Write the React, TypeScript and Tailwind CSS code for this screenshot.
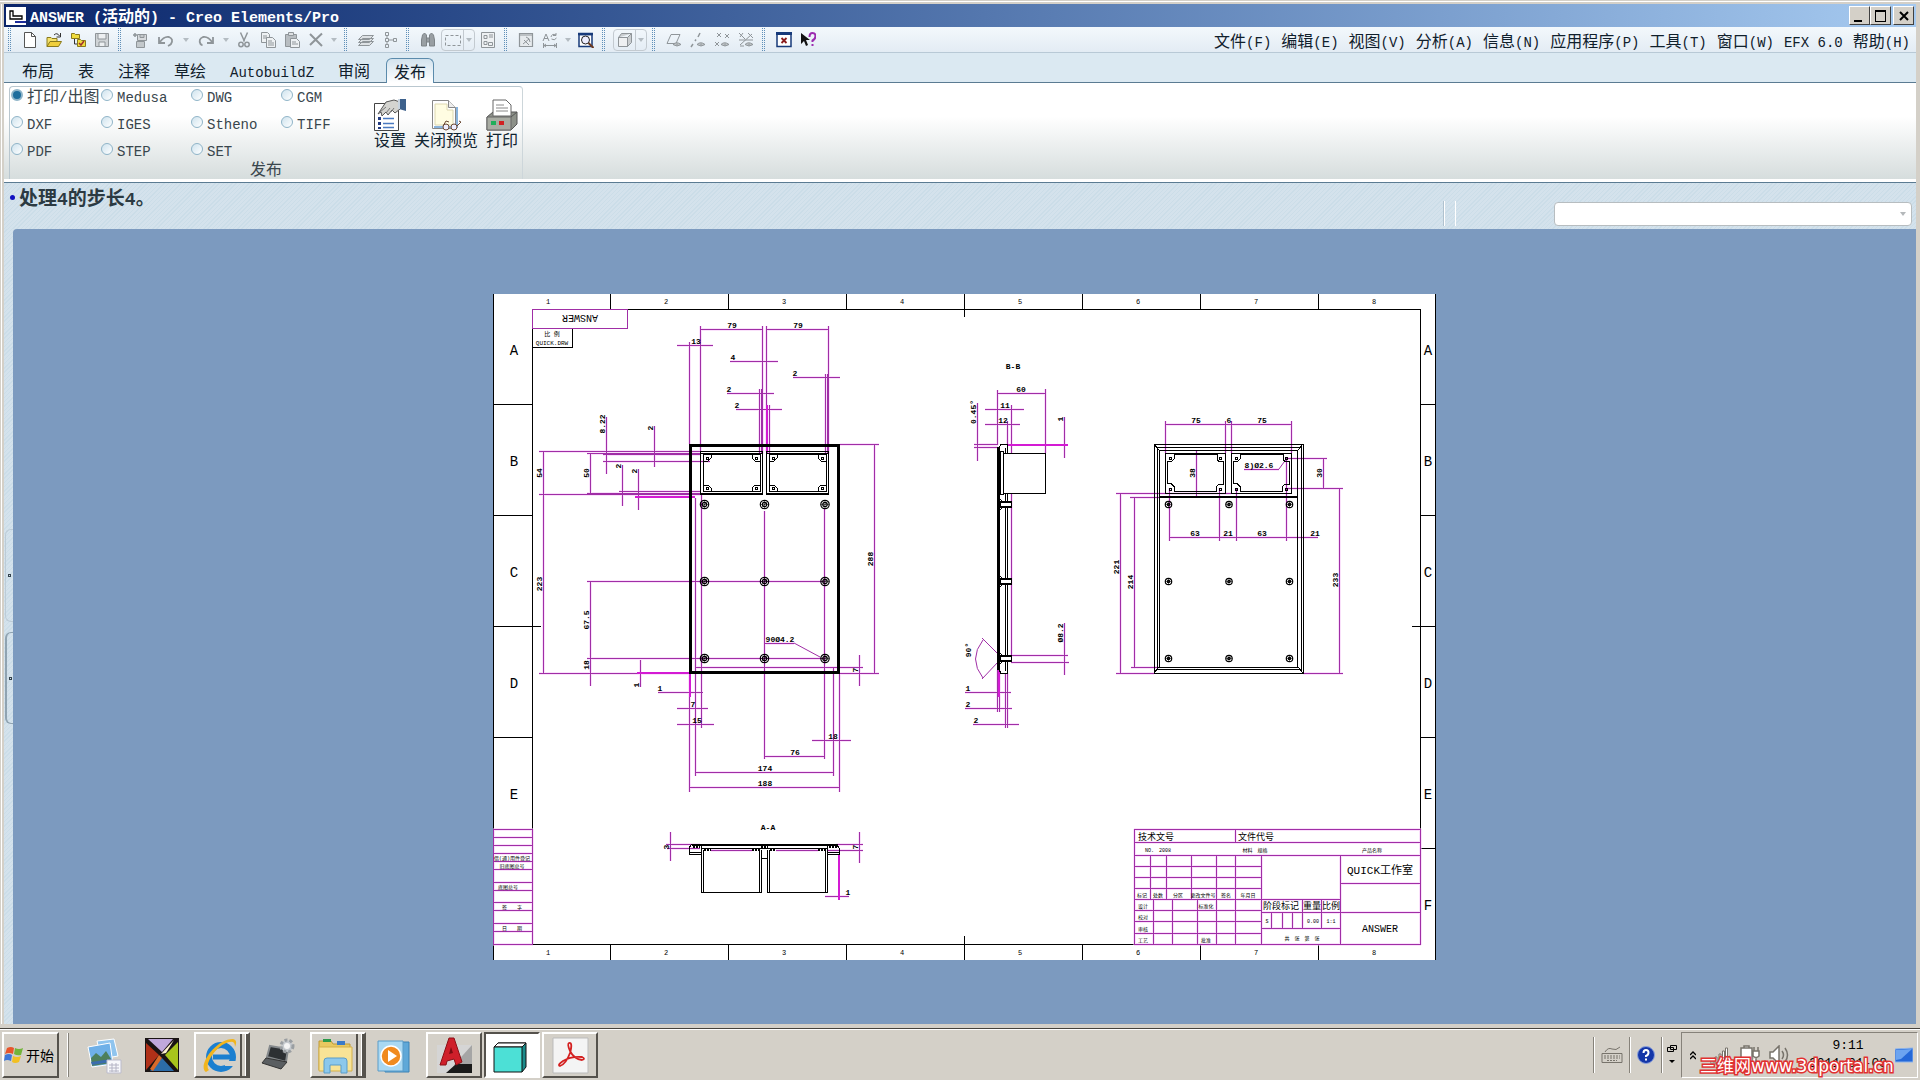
import React from 'react';

type Seg = [number, number, number];
type Note = [number, number, string];

// Splits a label so that Latin runs keep the half-width rhythm of the Chinese ones.
const Txt = ({ children, latin = 'text-sm' }: { children: string; latin?: string }) => (
  <>
    {children.split(/([\x20-\x7e]+)/).filter(Boolean).map((part, i) =>
      /^[\x20-\x7e]/.test(part) ? (
        <span key={i} className={`whitespace-pre font-['Liberation_Mono',monospace] leading-none ${latin}`}>{part}</span>
      ) : (
        <span key={i}>{part}</span>
      )
    )}
  </>
);

const Icon = ({ children, size = 'size-4' }: { children: React.ReactNode; size?: string }) => (
  <svg viewBox="0 0 16 16" className={`${size} shrink-0`} fill="none" stroke="#8f9599" strokeWidth="1" aria-hidden="true">
    {children}
  </svg>
);

const Tool = ({ label, wide, children }: { label: string; wide?: boolean; children: React.ReactNode }) => (
  <button aria-label={label} className={`flex h-6 items-center justify-center ${wide ? 'w-7' : 'w-6'}`}>
    <Icon>{children}</Icon>
  </button>
);

const Drop = () => (
  <button aria-label="更多" className="flex h-6 w-3 items-center justify-center">
    <span className="border-x-[3px] border-t-4 border-x-transparent border-t-[#b4bcc2]" />
  </button>
);

const Split = ({ label, children }: { label: string; children: React.ReactNode }) => (
  <span className="mx-px flex h-[22px] w-[34px] items-center rounded-sm border border-[#c3cad0]">
    <button aria-label={label} className="flex h-full w-[22px] items-center justify-center border-r border-[#c3cad0]">
      <Icon>{children}</Icon>
    </button>
    <button aria-label="更多" className="flex h-full flex-1 items-center justify-center">
      <span className="border-x-[3px] border-t-4 border-x-transparent border-t-[#b4bcc2]" />
    </button>
  </span>
);

const Grip = () => (
  <svg viewBox="0 0 4 23" className="mr-1.5 ml-1 h-[23px] w-1 shrink-0" aria-hidden="true">
    <path d="M.5 0v23M2.5 0v23" stroke="#5f8fb8" strokeDasharray="1 1" />
  </svg>
);

const eye = <path d="M7 12.500q3.500-3.500 8 0q-4 3-8 0z M11 11.500v2" fill="#c3c8cb" />;

const Toolbar = () => (
  <div className="flex items-center">
    <Grip />
    <Tool label="新建"><path d="M2.500.5h7l4 4v11h-11z" fill="#fff" stroke="#555" /><path d="M9.500.5v4h4" stroke="#555" /></Tool>
    <Tool label="打开">
      <path d="M1 14.500V5.500h4l1 1h5v3" fill="#f5e26a" stroke="#8a7a1c" />
      <path d="M1 14.500l3-5h11.500l-3 5z" fill="#f0cf3c" stroke="#8a7a1c" />
      <path d="M8 3q3-3 5.500 1M14.500 1v4h-4" stroke="#333" />
    </Tool>
    <Tool label="工作目录">
      <path d="M1.500 1.500h3l1 1h4v4h-8z" fill="#f0dc3c" stroke="#8a7a1c" />
      <path d="M4.500 7v5h3" stroke="#333" />
      <path d="M7.500 7.500h3l1 1h4v6h-8z" fill="#f0dc3c" stroke="#8a7a1c" />
      <path d="M9 11l2 2 3-4" stroke="#a03030" strokeWidth="1.500" />
    </Tool>
    <Tool label="保存"><path d="M1.500 1.500h13v13h-13z" fill="#cfd3d6" /><path d="M4 2v5h8V2M5 14v-4h6v4" fill="#eceff1" /></Tool>
    <Grip />
    <Tool label="再生">
      <path d="M5.500 2.500h9v6h-9z" fill="#d8dbde" /><path d="M8 3v2.500h4V3M4.500 9.500h8v6h-8z" fill="#c3c8cb" />
      <path d="M1 3h4M3 1v4" strokeWidth="1.500" />
    </Tool>
    <Tool label="撤销" wide><path d="M1 5v6h6M1.500 10.500Q6 4 11 5q5 2 2 7-1 1-3 2" strokeWidth="1.800" /></Tool>
    <Drop />
    <Tool label="重做" wide><path d="M15 5v6H9M14.500 10.500Q10 4 5 5q-5 2-2.500 7 1 1 2 1" strokeWidth="1.800" /></Tool>
    <Drop />
    <Tool label="剪切">
      <path d="M4.500.5l4 9M11.500.5l-4 9" strokeWidth="1.500" />
      <circle cx="5" cy="12.500" r="2.200" strokeWidth="1.500" /><circle cx="11" cy="12.500" r="2.200" strokeWidth="1.500" />
    </Tool>
    <Tool label="复制">
      <path d="M1.500.5h6l2 2v8h-8z" fill="#eef1f3" /><path d="M3 4h4M3 6h4" />
      <path d="M6.500 5.500h6l3 3v7h-9z" fill="#eef1f3" /><path d="M8 9h4M8 11h6M8 13h6" />
    </Tool>
    <Tool label="粘贴">
      <path d="M1.500 2.500h11v12h-11z" fill="#b8bdc1" /><path d="M4.500.5h5v3h-5z" fill="#dde0e2" />
      <path d="M6.500 6.500h6l3 3v6h-9z" fill="#eef1f3" /><path d="M8 10h4M8 12h6" />
    </Tool>
    <Tool label="删除"><path d="M2 2l12 12M14 1.500L2 13" strokeWidth="2" /></Tool>
    <Drop />
    <Grip />
    <Tool label="图层">
      <path d="M.5 13.500l4-4h11l-4 4zM.5 10.500l4-4h11l-4 4zM.5 7.500l4-4h11l-4 4z" fill="#dde1e4" />
    </Tool>
    <Tool label="模型树"><path d="M3.500.5h3v3h-3zM3.500 6.500h3v3h-3zM3.500 12.500h3v3h-3zM11.500 6.500h3v3h-3zM5 4v2M5 10v2M7 8h4" /></Tool>
    <Grip />
    <Tool label="查找">
      <path d="M2.500 3l2-2 2 2v11h-5V8zM13.500 3l-2-2-2 2v11h5V8zM6.500 6h3v4h-3z" fill="#999fa3" stroke="#7d8387" />
    </Tool>
    <Split label="框选"><path d="M.5 3.500h15v10H.5z" strokeDasharray="3 2" /></Split>
    <Tool label="选择过滤">
      <path d="M1.500.5h13v15h-13z" fill="#eef1f3" /><path d="M4 3.500h3v3H4zM9 3h4M9 5h4M4 9.500h3v3H4zM8.500 10.500h4v3h-4z" />
    </Tool>
    <Grip />
    <Tool label="草绘器"><path d="M1.500 1.500h13v13h-13zM1.500 3h13" fill="#e6eaed" strokeWidth="1.200" /><path d="M5 12l6-5M8 5q4 1 4 5M6 8l5 5" /></Tool>
    <Tool label="切换尺寸">
      <path d="M1 9l3-7 3 7M2 6.500h4M1.500 11v5M14.500 11v5M2 13.500h12M4 12l-2 1.500L4 15M12 12l2 1.500L12 15" />
      <path d="M9 5q1-4 5-2M14 1v2.500h-3M14.500 6q-2 3-5 1" />
    </Tool>
    <Drop />
    <Tool label="重新调整">
      <path d="M1 2.500h13v12H1z" fill="#fff" stroke="#173a7a" strokeWidth="1.500" /><path d="M0 2h15" stroke="#173a7a" strokeWidth="2.500" />
      <circle cx="7.500" cy="8" r="4" stroke="#222" fill="#eef" /><path d="M10.500 11l5 5" stroke="#6b3a22" strokeWidth="2" />
    </Tool>
    <Grip />
    <Split label="着色"><path d="M1.500 5.500h9v9h-9z" fill="#eef0f2" /><path d="M1.500 5.500l3-4h10v9l-4 4v-9l4-4M10.500 5.500h-9" fill="#c9cdd0" /></Split>
    <Grip />
    <Tool label="基准平面"><path d="M1 11.500l4-9h9l-4 9z" />{eye}</Tool>
    <Tool label="基准轴"><path d="M1 15l2-3M5 9l1-1.500M8 5l2-4" strokeWidth="1.500" />{eye}</Tool>
    <Tool label="基准点"><path d="M3 1l4 4M7 1L3 5M11 2l4 4M15 2l-4 4M1 10l4 4M5 10l-4 4" />{eye}</Tool>
    <Tool label="坐标系"><path d="M1 1l6 6M5 1L2 5M14 2L2 13M10 1l5 5M1 8h14M2 14h4" />{eye}</Tool>
    <Grip />
    <Tool label="关闭窗口">
      <path d="M1 1.500h14v13H1z" fill="#fff" stroke="#173a7a" strokeWidth="1.500" /><path d="M0 1.500h16" stroke="#173a7a" strokeWidth="3" />
      <path d="M5.500 6l5 5M10.500 6l-5 5" stroke="#8a1c1c" strokeWidth="1.800" />
    </Tool>
    <Tool label="上下文帮助">
      <path d="M1 1v11l3-3 2 5 2-1-2-5h4z" fill="#111" stroke="none" />
      <path d="M9.500 5q0-4 3-4t3 3-3 4.500V10M12.500 12v2" stroke="#9c2cb0" strokeWidth="2" />
    </Tool>
  </div>
);

const menus = ['文件(F)', '编辑(E)', '视图(V)', '分析(A)', '信息(N)', '应用程序(P)', '工具(T)', '窗口(W)', 'EFX 6.0', '帮助(H)'];
const tabs = ['布局', '表', '注释', '草绘', 'AutobuildZ', '审阅', '发布'];
const formats = ['打印/出图', 'Medusa', 'DWG', 'CGM', 'DXF', 'IGES', 'Stheno', 'TIFF', 'PDF', 'STEP', 'SET'];

const Ribbon = () => (
  <div className="border-b border-[#5b7b92] bg-white pb-[3px]">
    <div className="bg-linear-to-b from-white from-35% to-[#d6dddd] pt-[3px] pl-[5px]">
      <div className="w-[514px] rounded-t-sm border border-b-0 border-[#b9c7cf] border-r-[#cdd6da] px-px">
        <div className="flex h-[71px] gap-[3px]">
          <fieldset className="-mt-0.5 grid grid-cols-[repeat(4,90px)] grid-rows-[repeat(3,27px)]">
            {formats.map((f, i) => (
              <label key={f} className="flex h-5 items-center gap-1 text-base leading-5 whitespace-nowrap text-[#39464d]">
                <input
                  type="radio"
                  name="format"
                  defaultChecked={i === 0}
                  className="size-3 shrink-0 appearance-none rounded-full border border-[#8fb4c8] bg-linear-to-br from-[#cfe3ee] to-white checked:border-2 checked:bg-[#1f6d9c] checked:bg-none"
                />
                <span><Txt>{f}</Txt></span>
              </label>
            ))}
          </fieldset>
          <div className="flex gap-2 pt-3 text-[#0f2430]">
            <button className="flex flex-col items-center">
              <svg viewBox="0 0 32 32" className="size-8" aria-hidden="true">
                <path d="M.5 4.500h24v27H.5z" fill="#fff" stroke="#444" />
                <path d="M4 18h3v3H4zM4 23h3v3H4zM4 28h3v2H4z" fill="#223a80" /><path d="M9 19.500h11M9 24.500h11M9 28.500h11" stroke="#4a7ac0" strokeWidth="1.500" />
                <path d="M4 15L12 3l8-2 6 2v7l-5 4-3-3-4 5-2-3-4 4-1-4z" fill="#d4d4d0" stroke="#555" />
                <path d="M12 8l-6 5M16 9l-4 5M20 9l-3 4" stroke="#777" /><path d="M25 0h7v12l-7-2z" fill="#3d618c" />
                <path d="M25 0v10" stroke="#c8d4e0" strokeWidth="2" />
              </svg>
              <span className="text-base leading-4">设置</span>
            </button>
            <button className="flex flex-col items-center">
              <svg viewBox="0 0 32 32" className="size-8" aria-hidden="true">
                <path d="M2.500 1.500h16l7 7v21h-23z" fill="#fff" stroke="#888" /><path d="M5 5h12v6h6v15H5z" fill="#fffde2" stroke="#ddd8b0" />
                <path d="M18.500 1.500v7h7" fill="#eee" stroke="#888" /><path d="M27 8v20H4" fill="none" stroke="#8ab4dc" strokeWidth="2" />
                <circle cx="16" cy="28" r="3" fill="#eef" stroke="#6b4a35" /><circle cx="24" cy="28" r="3" fill="#eef" stroke="#6b4a35" />
                <path d="M13 27l3-5 3 1M27 27l4-4-2-1" fill="none" stroke="#6b4a35" />
              </svg>
              <span className="text-base leading-4">关闭预览</span>
            </button>
            <button className="flex flex-col items-center">
              <svg viewBox="0 0 32 32" className="size-8" aria-hidden="true">
                <path d="M1 18l6-5h24v12l-6 6H1z" fill="#8d9189" stroke="#555" /><path d="M1 18h24v13H1z" fill="#a9aca3" stroke="#666" />
                <path d="M25 18l6-5" stroke="#555" /><path d="M7 17V1h13l5 5v11z" fill="#fff" stroke="#666" />
                <path d="M10 6h8M10 9h12M10 12h12" stroke="#888" /><path d="M5 22h5v4H5z" fill="#1fae5a" /><path d="M13 22h5v4h-5z" fill="#d02222" />
              </svg>
              <span className="text-base leading-4">打印</span>
            </button>
          </div>
        </div>
        <div className="h-[21px] text-center text-base leading-5 text-[#39464d]">发布</div>
      </div>
    </div>
  </div>
);

/* ---------- drawing sheet ---------- */

const hor = (segs: Seg[]) => segs.map(([y, a, b]) => `M${a} ${y + 0.5}H${b}`).join('');
const ver = (segs: Seg[]) => segs.map(([x, a, b]) => `M${x + 0.5} ${a}V${b}`).join('');

const dimH: Seg[] = [
  [329, 700, 763], [329, 766, 829], [345, 677, 713], [361, 730, 778], [377, 793, 840], [393, 727, 774], [409, 736, 782],
  [451, 539, 700], [453, 587, 700], [454, 603, 700], [461, 603, 710], [491, 619, 700], [493, 587, 700], [494, 539, 700],
  [444, 840, 879], [673, 840, 879], [581, 587, 825], [658, 587, 825], [673, 539, 690], [667, 695, 863],
  [692, 658, 703], [708, 677, 708], [724, 677, 714], [740, 812, 851], [756, 764, 825], [772, 695, 834], [787, 689, 840], [643, 764, 794],
  [844, 666, 700], [848, 667, 700], [844, 836, 863], [850, 828, 863], [850, 711, 752], [850, 776, 818], [896, 825, 849],
  [393, 998, 1045], [409, 985, 1024], [424, 985, 1020], [444, 974, 998], [447, 974, 998], [655, 1011, 1068], [662, 1011, 1069],
  [692, 965, 1011], [708, 965, 1012], [724, 973, 1019],
  [424, 1165, 1292], [469, 1244, 1279], [458, 1286, 1327], [488, 1286, 1343], [673, 1303, 1343], [673, 1116, 1154],
  [493, 1116, 1231], [497, 1130, 1160], [667, 1131, 1160], [537, 1169, 1318],
];

const dimV: Seg[] = [
  [700, 326, 452], [762, 326, 454], [766, 326, 452], [828, 326, 454], [689, 342, 444], [825, 374, 454], [827, 374, 454],
  [759, 389, 454], [761, 389, 454], [769, 405, 454], [606, 417, 474], [654, 426, 467], [543, 451, 673], [590, 453, 493],
  [622, 465, 506], [638, 469, 510], [695, 498, 776], [701, 494, 728], [764, 511, 759], [824, 508, 759], [874, 444, 673],
  [590, 581, 686], [640, 660, 687], [689, 673, 792], [839, 673, 792], [833, 667, 776], [859, 655, 686],
  [670, 832, 861], [859, 832, 863],
  [997, 390, 445], [1045, 389, 453], [1011, 405, 655], [1007, 421, 445], [977, 403, 461], [1064, 417, 458], [1064, 623, 675],
  [997, 670, 712], [999, 670, 712], [1005, 673, 728], [1007, 673, 728],
  [1165, 421, 453], [1225, 421, 453], [1231, 421, 453], [1291, 421, 453], [1196, 451, 496], [1323, 458, 488], [1339, 488, 673],
  [1120, 493, 673], [1134, 497, 667], [1169, 488, 541], [1219, 488, 541], [1236, 488, 541], [1286, 458, 541],
];

const tableH: Seg[] = [
  ...[829, 837, 845, 853, 861, 869, 882, 890, 902, 910, 923, 931, 944].map((y): Seg => [y, 493, 533]),
  [829, 1134, 1421], [842, 1134, 1421], [855, 1134, 1421], [944, 1134, 1421],
  ...[866, 877, 888, 899, 910, 921, 933].map((y): Seg => [y, 1134, 1261]),
  [899, 1261, 1340], [912, 1261, 1421], [928, 1261, 1340], [883, 1340, 1421],
];

const tableV: Seg[] = [
  [532, 829, 944], [493, 829, 944], [1134, 829, 945], [1420, 829, 945], [1235, 829, 842], [1235, 855, 944], [1261, 855, 944], [1340, 855, 944],
  [1150, 855, 899], [1166, 855, 899], [1191, 855, 899], [1216, 855, 944], [1153, 899, 944], [1172, 899, 944], [1197, 899, 944],
  [1302, 899, 928], [1321, 899, 928], [1271, 912, 928], [1282, 912, 928], [1292, 912, 928],
];

const columnTicks = [610, 728, 846, 964, 1082, 1200, 1318];
const leftTicks: Seg[] = [[404, 493, 532], [515, 493, 532], [626, 493, 541], [737, 493, 532]];
const rightTicks: Seg[] = [[404, 1420, 1436], [515, 1420, 1436], [626, 1412, 1436], [737, 1420, 1436], [848, 1420, 1436]];

const notes: Note[] = [
  [732, 329, '79'], [798, 329, '79'], [696, 345, '13'], [733, 361, '4'], [795, 377, '2'], [729, 393, '2'], [737, 409, '2'],
  [660, 692, '1'], [693, 708, '7'], [697, 724, '15'], [833, 740, '18'], [795, 756, '76'], [765, 772, '174'], [765, 787, '188'], [780, 643, '90Ø4.2'],
  [848, 896, '1'], [1021, 393, '60'], [1005, 409, '11'], [1003, 424, '12'], [968, 692, '1'], [968, 708, '2'], [976, 724, '2'],
  [1196, 424, '75'], [1229, 424, '6'], [1262, 424, '75'], [1259, 469, '8)Ø2.6'], [1195, 537, '63'], [1228, 537, '21'], [1262, 537, '63'], [1315, 537, '21'],
  [768, 831, 'A-A'], [1013, 370, 'B-B'],
];

const sideNotes: Note[] = [
  [606, 424, '8.22'], [654, 428, '2'], [543, 473, '54'], [590, 473, '50'], [622, 466, '2'], [638, 471, '2'], [874, 559, '288'],
  [543, 584, '223'], [590, 620, '67.5'], [590, 665, '18'], [640, 685, '1'], [859, 670, '7'], [670, 847, '3'], [859, 847, '7'],
  [977, 412, '0.45°'], [1064, 419, '1'], [972, 650, '90°'], [1064, 633, 'Ø8.2'],
  [1196, 473, '38'], [1323, 473, '30'], [1339, 580, '233'], [1120, 567, '221'], [1134, 582, '214'],
];

const tableNotes: Note[] = [
  [512, 860, '借(通)用件登记'], [512, 868, '旧底图总号'], [508, 889, '底图总号'], [512, 909, '签　　字'], [512, 930, '日　　期'],
  [1158, 852, 'NO.　2008'], [1255, 852, '材料　规格'], [1372, 852, '产品名称'],
  [1142, 897, '标记'], [1158, 897, '处数'], [1178, 897, '分区'], [1203, 897, '更改文件号'], [1226, 897, '签名'], [1248, 897, '年月日'],
  [1143, 908, '设计'], [1206, 908, '标准化'], [1143, 919, '校对'], [1143, 931, '审核'], [1143, 942, '工艺'], [1206, 942, '批准'],
  [1267, 923, 'S'], [1313, 923, '0.00'], [1331, 923, '1:1'], [1302, 940, '共　张　第　张'],
];

const Boss = ({ x, y, r }: { x: number; y: number; r: number }) => (
  <g>
    <circle cx={x} cy={y} r={r} />
    <circle cx={x} cy={y} r={r - 2} />
    <path d={`M${x - r} ${y}h${r * 2}M${x} ${y - r}v${r * 2}M${x - 2} ${y + 2}l4-4`} strokeWidth="0.500" />
  </g>
);

const Sheet = () => (
  <svg viewBox="493 294 943 666" className="w-[943px] shrink-0" role="img" aria-label="ANSWER" fontFamily="'Liberation Mono','Noto Sans CJK SC',monospace">
    <path d="M493 294h943v666H493z" fill="#fff" />
    <g fill="none" stroke="#000" shapeRendering="crispEdges">
      <path d="M493.500 294V960M532.500 309.500H1420.500V944.500H532.500zM1435.500 294V960M532.500 328V347.500H572.500V328" />
      <path d={ver(columnTicks.flatMap((x): Seg[] => [[x, 294, x === 964 ? 317 : 309], [x, x === 964 ? 936 : 944, 960]]))} />
      <path d={hor(leftTicks) + hor(rightTicks)} />
    </g>
    <g fill="none" stroke="#f6c4f8" strokeWidth="3" opacity="0.500">
      <path d={hor(dimH) + ver(dimV) + hor(tableH) + ver(tableV)} />
    </g>
    <g fill="none" stroke="#a02ea6" shapeRendering="crispEdges">
      <path d={hor(dimH) + ver(dimV) + hor(tableH) + ver(tableV)} />
      <path d="M532.500 309.500H627.500V328.500H532.500z" />
    </g>
    <path d="M794 643l26 14M1279 469l8-11M982 638l16 16M982 679l16-17M983 640q-15 19 0 38" fill="none" stroke="#a02ea6" />
    <path d="M635 497H695M767 405V454M637 673H690M690 673V697M839 855V900M1008 445H1068M998.500 670V697" fill="none" stroke="#d41ad4" strokeWidth="2" shapeRendering="crispEdges" />

    <g fill="none" stroke="#000" shapeRendering="crispEdges">
      <path d="M690.500 445.500H838.500V672.500H690.500z" strokeWidth="3" />
      <path d="M700.500 451.500H762.500V494.500H700.500zM766.500 451.500H828.500V494.500H766.500z" />
      <path d="M701 493.500H762M767 493.500H828M701 453.500H762M767 453.500H828" />
      <path d="M703.500 454.500H760.500V491.500H703.500zM769.500 454.500H826.500V491.500H769.500z" />
      {[703, 769].map((x) => (
        <path key={x} d={`M${x} 461h5l3-3v-4M${x + 57} 461h-5l-3-3v-4M${x} 485h5l3 3v4M${x + 57} 485h-5l-3 3v4M${x + 3} 457h2v2h-2zM${x + 52} 457h2v2h-2zM${x + 3} 487h2v2h-2zM${x + 52} 487h2v2h-2z`} />
      ))}

      <path d="M692 845H838" strokeWidth="2" />
      <path d="M701 848.500H828M689.500 848v6H701M689.500 852.500H701M692 844l-3 4M836 844l3 4M839.500 848v6H828M828 852.500h11M762 858.500h6M701.500 846V892.500H761.500V850M703.500 850V892M759.500 850V892M767.500 850V892.500H827.500V846M769.500 850V892M825.500 850V892" />
      <path d="M704 850h7M752 850h8M770 850h6M818 850h8M761 847h7M693 847h7M829 847h8" strokeWidth="2" strokeDasharray="2 1" />

      <path d="M998.500 447V670" strokeWidth="3" />
      <path d="M999 447l2-2.500h6.500V673.500H1001l-2-4M1005.500 448V671M1000.500 451.500h3V494.500h-3z" />
      <path d="M1003.500 453.500H1045.500V493.500H1003.500z" fill="#fff" />
      {[501, 578, 655].map((y) => (
        <path key={y} d={`M1000 ${y + 0.5}h11.500v6H1000zM1000 ${y + 1.5}h11M1000 ${y + 5.5}h11M1000 ${y - 2}l3 3M1000 ${y + 9}l3-3`} fill="#fff" />
      ))}

      <path d="M1154.500 444.500H1303.500V673.500H1154.500zM1157.500 447.500H1301.500V669.500H1157.500zM1159.500 450.500H1297.500V667.500H1159.500zM1154 444l5 6M1303 444l-5 6M1154 673l5-6M1303 673l-5-6" />
      <path d="M1160 497H1298" strokeWidth="2" />
      <path d="M1165.500 453.500H1225.500V493.500H1165.500zM1231.500 453.500H1291.500V493.500H1231.500z" />
      {[1167, 1233].map((x) => (
        <React.Fragment key={x}>
          <path d={`M${x + 7} 454.500H${x + 50}v5l2 2h4V484h-4l-3 3v4.500H${x + 7}v-5l-3-3h-4V461h5l2-2z`} />
          <path d={`M${x + 2} 457h2v2h-2zM${x + 52} 457h2v2h-2zM${x + 2} 488h2v2h-2zM${x + 52} 488h2v2h-2z`} />
        </React.Fragment>
      ))}
    </g>

    <g fill="none" stroke="#000" strokeWidth="1.200">
      {[504.5, 581.5, 658.5].flatMap((y) => [
        ...[704.5, 764.5, 825].map((x) => <Boss key={`f${x}-${y}`} x={x} y={y} r={4.2} />),
        ...[1168.5, 1229, 1289.5].map((x) => <Boss key={`b${x}-${y}`} x={x} y={y} r={3.2} />),
      ])}
    </g>

    <g fontSize="8" fontWeight="700" textAnchor="middle">
      {notes.map(([x, y, t], i) => <text key={i} x={x} y={y - 1}>{t}</text>)}
      {sideNotes.map(([x, y, t], i) => <text key={i} transform={`translate(${x - 1} ${y}) rotate(-90)`}>{t}</text>)}
      {['1', '2', '3', '4', '5', '6', '7', '8'].map((t, i) => (
        <React.Fragment key={t}>
          <text x={548 + i * 118} y="304" fontSize="7" fontWeight="400">{t}</text>
          <text x={548 + i * 118} y="955" fontSize="7" fontWeight="400">{t}</text>
        </React.Fragment>
      ))}
    </g>
    <g fontSize="14" textAnchor="middle">
      {['A', 'B', 'C', 'D', 'E', 'F'].map((t, i) => (
        <React.Fragment key={t}>
          {i < 5 && <text x="514" y={355 + i * 111}>{t}</text>}
          <text x="1428" y={355 + i * 111}>{t}</text>
        </React.Fragment>
      ))}
    </g>
    <g fontSize="5" textAnchor="middle">
      {tableNotes.map(([x, y, t]) => <text key={`${x}-${y}`} x={x} y={y}>{t}</text>)}
      <text x="552" y="336" fontSize="6">比 例</text>
      <text x="552" y="345" fontSize="6">QUICK.DRW</text>
    </g>
    <g fontSize="10" textAnchor="middle">
      <text transform="translate(580 315) rotate(180)">ANSWER</text>
      <text x="1156" y="840" fontSize="9">技术文号</text>
      <text x="1256" y="840" fontSize="9">文件代号</text>
      <text x="1281" y="909" fontSize="9">阶段标记</text>
      <text x="1312" y="909" fontSize="9">重量</text>
      <text x="1331" y="909" fontSize="9">比例</text>
      <text x="1380" y="874" fontSize="11">QUICK工作室</text>
      <text x="1380" y="932">ANSWER</text>
    </g>
  </svg>
);

/* ---------- taskbar ---------- */

const raised = 'border-2 border-t-white border-l-white border-r-[#55524c] border-b-[#55524c]';

type App = { name: string; frame?: 'open' | 'stack' | 'active'; art: React.ReactNode };

const apps: App[] = [
  {
    name: '图库',
    art: (
      <>
        <path d="M11 4l17-2 4 17-17 3z" fill="#8fc4ee" stroke="#fff" /><path d="M2 10l22-4 3 21-21 3z" fill="#6fb0e8" stroke="#fff" />
        <path d="M5 21l5-5 5 4 5-6 5 8v4l-19 3z" fill="#4d7f5c" /><path d="M5 25l20-3v3l-19 3z" fill="#3a6cae" />
        <path d="M21 23h14v13H21z" fill="#f7f8fb" stroke="#bbc" />
        <path d="M23 28h10M23 31h10M23 34h10M26 26v9M30 26v9" stroke="#b4b4c4" />
      </>
    ),
  },
  {
    name: 'X',
    art: (
      <>
        <path d="M1 1h34v34H1z" fill="#1a1414" /><path d="M4 2h25L18 15z" fill="#c0a8dc" /><path d="M2 6l13 12L2 33z" fill="#b03018" />
        <path d="M34 5v28L21 18z" fill="#a8c41c" /><path d="M18 21l12 13H6z" fill="#2c6ca8" /><path d="M17 17l13-14-8 13z" fill="#fff2d0" />
        <path d="M15 18l-9 14 3 2 9-13z" fill="#d86a2a" />
      </>
    ),
  },
  {
    name: 'Internet Explorer',
    frame: 'stack',
    art: (
      <>
        <circle cx="20" cy="20" r="12" fill="none" stroke="#1b7fd0" strokeWidth="6" /><path d="M12 20h20" stroke="#1b7fd0" strokeWidth="5" />
        <path d="M23 24h13v5H24z" fill="#d4d0c8" /><path d="M5 35C-4 30 14 2 32 2q5 1 2 8 0-6-5-5C17 6 2 28 8 33z" fill="#f2b51c" />
      </>
    ),
  },
  {
    name: '系统',
    art: (
      <>
        <path d="M10 9l18 3-2 13L7 20z" fill="#2d3033" stroke="#85898c" strokeWidth="2" /><path d="M6 21l21 4-6 7L2 26z" fill="#5a5e61" stroke="#333" />
        <circle cx="27" cy="9" r="6" fill="#c5c9cd" stroke="#9a9ea2" strokeWidth="3" strokeDasharray="3 2" /><circle cx="27" cy="9" r="3" fill="#f4f4f4" />
      </>
    ),
  },
  {
    name: '资源管理器',
    frame: 'stack',
    art: (
      <>
        <path d="M2 4h12l2 3h17v26H2z" fill="#e8c860" stroke="#c09a34" /><path d="M6 2h8v3H6z" fill="#2c9a4a" /><path d="M20 4h8v4h-8z" fill="#3a7ac8" />
        <path d="M2 10h33v24H2z" fill="#f8e396" stroke="#d4b048" /><path d="M7 36V24q0-3 3-3h17q3 0 3 3v12h-6v-8H13v8z" fill="#8cc8ec" stroke="#5a9cc8" />
      </>
    ),
  },
  {
    name: 'Media Player',
    art: (
      <>
        <path d="M9 5h24v30H9z" fill="#5fa8d8" stroke="#3c82b4" /><path d="M2 4h25v30H2z" fill="#a9d8f2" stroke="#5a9cc8" />
        <circle cx="15" cy="19" r="10" fill="#f08a1e" stroke="#fff" strokeWidth="1.500" /><path d="M12 13l9 6-9 6z" fill="#fff" />
      </>
    ),
  },
  {
    name: 'AutoCAD',
    frame: 'open',
    art: (
      <>
        <path d="M1 8h35v28H1z" fill="#d5d5d5" /><path d="M36 8L18 28h18z" fill="#a5a5a5" /><path d="M20 27h16v9H10z" fill="#1a1a1a" />
        <path d="M4 28L13 1h5l8 24-6 3-2-6-7 2-1 4z" fill="#cf1f2a" stroke="#8c1016" /><path d="M13 17l2-7 2 6z" fill="#7c0c12" />
      </>
    ),
  },
  {
    name: 'Creo Elements/Pro',
    frame: 'active',
    art: (
      <>
        <path d="M2 10l4-4h28v24l-4 5z" fill="#1a8a8a" stroke="#111" /><path d="M2 10l4-4h28l-4 4z" fill="#fff" stroke="#111" />
        <path d="M2 10h28v25H2z" fill="#4ce0d6" stroke="#111" />
      </>
    ),
  },
  {
    name: 'Adobe Reader',
    frame: 'open',
    art: (
      <>
        <path d="M1 1h35v35H1z" fill="#f4f4f4" stroke="#bbb" />
        <path d="M17 6q4-1 1 10-4 11-10 13-3-1 3-5 8-5 19-4 4 2 0 3-8-1-12-9-3-7-1-8z" fill="none" stroke="#d42020" strokeWidth="1.800" />
      </>
    ),
  },
];

const frames = {
  none: 'border-2 border-transparent pr-1',
  open: raised,
  stack: `${raised} pr-1.5 shadow-[inset_-2px_0_#55524c,inset_-3px_0_#fff,inset_-6px_0_#d4d0c8,inset_-8px_0_#55524c]`,
  active: 'border-2 border-t-[#55524c] border-l-[#55524c] border-r-white border-b-white bg-white pr-1',
};

const Divider = () => <span className="h-9 w-0.5 border-l border-l-[#86827a] bg-white" />;

const Taskbar = () => (
  <footer className="flex h-[51px] items-center border-t border-white bg-[#d4d0c8] pr-0.5 pl-0.5">
    <button className={`flex h-[46px] w-[57px] items-center gap-0.5 ${raised}`}>
      <svg viewBox="0 0 20 20" className="size-5 shrink-0" aria-hidden="true">
        <path d="M3 3q4-2 7 0L9 9Q5 7 1 9z" fill="#e8552c" /><path d="M11 3q4 2 8 0l-2 7q-4 1-7-1z" fill="#72b43a" />
        <path d="M1 10q4-2 7 0l-1 6q-4-2-7 0z" fill="#3f78d8" /><path d="M9 11q4 2 8 0l-2 6q-4 2-7 0z" fill="#f2c022" />
      </svg>
      <span className="text-sm whitespace-nowrap text-black">开始</span>
    </button>
    <span className="mx-2 h-11 w-0.5 border-l border-white bg-[#86827a]" />
    <nav className="flex gap-0.5 pl-px">
      {apps.map((a) => (
        <button key={a.name} aria-label={a.name} className={`flex h-[46px] w-14 items-center justify-center ${frames[a.frame ?? 'none']}`}>
          <svg viewBox="0 0 37 37" className="size-[37px] shrink-0" aria-hidden="true">{a.art}</svg>
        </button>
      ))}
    </nav>
    <div className="ml-auto flex items-center gap-1.5">
      <Divider />
      <svg viewBox="0 0 22 18" className="h-[18px] w-[22px]" fill="none" stroke="#77736b" aria-hidden="true">
        <path d="M3 10h16M3 12h16M6 14.500h10" strokeDasharray="2 1" /><path d="M1 7.500h20v9H1zM4 6q3-5 7-3t8-2" />
      </svg>
      <Divider />
      <svg viewBox="0 0 18 18" className="size-[18px]" aria-hidden="true">
        <circle cx="9" cy="9" r="8.500" fill="#1436a8" stroke="#8aa0dc" />
        <path d="M6.500 7q0-3 2.500-3t2.500 2.500T9 10v1M9 12.500v2" fill="none" stroke="#fff" strokeWidth="2" />
      </svg>
      <Divider />
      <svg viewBox="0 0 10 20" className="-mx-0.5 h-5 w-2.5" fill="none" stroke="#000" aria-hidden="true">
        <path d="M3.500.5h6v4h-6zM.5 2.500h6v4h-6z" /><path d="M2 15h6l-3 3z" fill="#000" stroke="none" />
      </svg>
      <div className="relative flex h-[46px] w-[237px] items-center border border-t-[#86827a] border-r-white border-b-white border-l-[#86827a] pr-1 pl-2">
        <svg viewBox="0 0 6 9" className="h-[9px] w-1.5" fill="none" stroke="#000" strokeWidth="1.300" aria-hidden="true"><path d="M0 4l3-3 3 3M0 8l3-3 3 3" /></svg>
        <svg viewBox="0 0 80 20" className="ml-3.5 h-5 w-20" fill="#fff" stroke="#77736b" aria-hidden="true">
          <path d="M1 15h2v4H1zM5 12h2v7H5zM9 9h2v10H9zM12.500 6h2v13h-2zM15.500 3h2v16h-2z" />
          <path d="M31 3h11v16H31zM34 1h5v2h-5zM43 6h6v5q-3 3-6 0zM44 2v4M48 2v4M46 12v6h-6" strokeWidth="1.500" />
          <path d="M60 7h3l6-6v18l-6-6h-3z" strokeWidth="1.500" /><path d="M72 6q3 4 0 8M75 3q5 7 0 14" fill="none" strokeWidth="1.500" />
        </svg>
        <div className="mr-2 ml-auto flex flex-col items-center font-['Liberation_Mono',monospace] text-[13px] leading-[18px] text-black">
          <span>9:11</span>
          <span>2011-01-08</span>
        </div>
        <svg viewBox="0 0 18 16" className="h-4 w-[18px]" aria-hidden="true">
          <path d="M0 2l18-1v14H0z" fill="#2468d8" stroke="#8cb4ec" /><path d="M1 3l16-1-11 10-5 1z" fill="#6ca4f0" />
        </svg>
        <span className="absolute top-[23px] left-[18px] font-['DejaVu_Sans','Noto_Sans_CJK_SC',sans-serif] text-[17px] leading-5 whitespace-nowrap text-white [-webkit-text-stroke:3px_#e03030] [paint-order:stroke_fill]">
          三维网www.3dportal.cn
        </span>
      </div>
    </div>
  </footer>
);

const winBtn = 'flex h-[19px] w-[21px] items-center justify-center border border-t-white border-l-white border-r-[#404040] border-b-[#404040] bg-[#d4d0c8]';
const hatch = 'bg-[#d4e2ec] bg-[repeating-linear-gradient(135deg,transparent_0_2px,#cbdde8_2px_3px)]';

export default function App() {
  return (
    <div className="flex min-h-screen flex-col bg-[#d4d0c8] font-['Noto_Sans_CJK_SC',sans-serif]">
      <div className="flex flex-1 flex-col border-b border-[#45423c] pb-1">
        <div className="h-0.5 border-b border-white" />
        <div className="flex flex-1 flex-col border-l border-[#d4d0c8] pt-0.5 pr-1">
          <div className="flex flex-1 flex-col border-l border-white pl-0.5">
            <header className="flex h-[23px] items-center bg-linear-to-r from-[#0a246a] to-[#a6caf0] pr-0.5 pl-0.5 text-base font-bold text-white">
              <svg viewBox="0 0 20 18" className="mr-1 h-[18px] w-5" aria-hidden="true">
                <path d="M0 0h20v18H0z" fill="#fff" /><path d="M4 4h3v5h9v3H4z" fill="#fff" stroke="#000" strokeWidth="1.300" /><path d="M9 14h11v2H9z" fill="#1c2c9c" />
              </svg>
              <h1 className="leading-[23px] whitespace-pre"><Txt latin="text-[15px]">ANSWER (活动的) - Creo Elements/Pro</Txt></h1>
              <div className="ml-auto flex">
                <button aria-label="最小化" className={winBtn}><span className="mt-2.5 mr-1 h-0.5 w-2 bg-black" /></button>
                <button aria-label="最大化" className={winBtn}><span className="h-3 w-[11px] border border-t-2 border-black" /></button>
                <button aria-label="关闭" className={`${winBtn} ml-0.5`}>
                  <svg viewBox="0 0 10 10" className="size-2.5" aria-hidden="true"><path d="M1 1l8 8M9 1L1 9" stroke="#000" strokeWidth="2" /></svg>
                </button>
              </div>
            </header>

            <div className="flex h-[26px] items-center justify-between border-b border-[#b8c9d6] bg-linear-to-b from-[#f3f8fc] to-[#e3ecf4]">
              <Toolbar />
              <nav className="flex gap-2.5 pr-1.5 text-base leading-6 whitespace-nowrap text-[#10202c]">
                {menus.map((m) => <button key={m}><Txt>{m}</Txt></button>)}
              </nav>
            </div>

            <div className="flex h-[30px] items-end border-b border-[#5b7b92] bg-[#dbe9f2] pl-1.5">
              {tabs.map((t) => (
                <button
                  key={t}
                  className={
                    t === '发布'
                      ? 'mx-1 -mb-px h-[25px] rounded-t-md border border-b-0 border-[#5b8bac] bg-linear-to-b from-[#d3e3ee] to-white px-[7px] text-base leading-[22px] text-[#10202c]'
                      : 'mx-1 h-6 px-2 text-base leading-[22px] text-[#10202c]'
                  }
                >
                  <Txt>{t}</Txt>
                </button>
              ))}
            </div>

            <Ribbon />

            <div className={`flex h-[46px] justify-between ${hatch}`}>
              <p className="flex h-7 items-center gap-1 pl-1.5 text-[19px] font-bold text-[#2c3a42]">
                <span className="size-[5px] rounded-full bg-[#1010c0]" />
                <span><Txt latin="text-lg">处理4的步长4。</Txt></span>
              </p>
              <div className="flex items-end pr-1 pb-[3px]">
                <span className="h-[25px] w-3 border-x border-white shadow-[-1px_0_#b0c2cf]" />
                <div className="relative ml-[98px]">
                  <select aria-label="过滤器" className="block h-6 w-[358px] appearance-none rounded-sm border border-[#b7bdc0] bg-white" />
                  <span className="pointer-events-none absolute top-2.5 right-1.5 border-x-[3px] border-t-4 border-x-transparent border-t-[#b4b8ba]" />
                </div>
              </div>
            </div>

            <main className={`flex flex-1 ${hatch}`}>
              <aside className="flex w-[9px] flex-col justify-center gap-2.5 pl-px">
                <button aria-label="导航器" className="flex h-[93px] items-center justify-center rounded-l-md border border-r-0 border-[#bccbd6]">
                  <span className="size-[3px] border border-[#33424c]" />
                </button>
                <button aria-label="浏览器" className="flex h-[92px] items-center justify-center rounded-l-md border border-r-0 border-l-2 border-[#8fa3b1]">
                  <span className="size-[3px] border border-[#33424c]" />
                </button>
              </aside>
              <div className="flex flex-1 items-center justify-center rounded-tl bg-[#7c9abf]">
                <Sheet />
              </div>
            </main>
          </div>
        </div>
      </div>
      <Taskbar />
    </div>
  );
}
